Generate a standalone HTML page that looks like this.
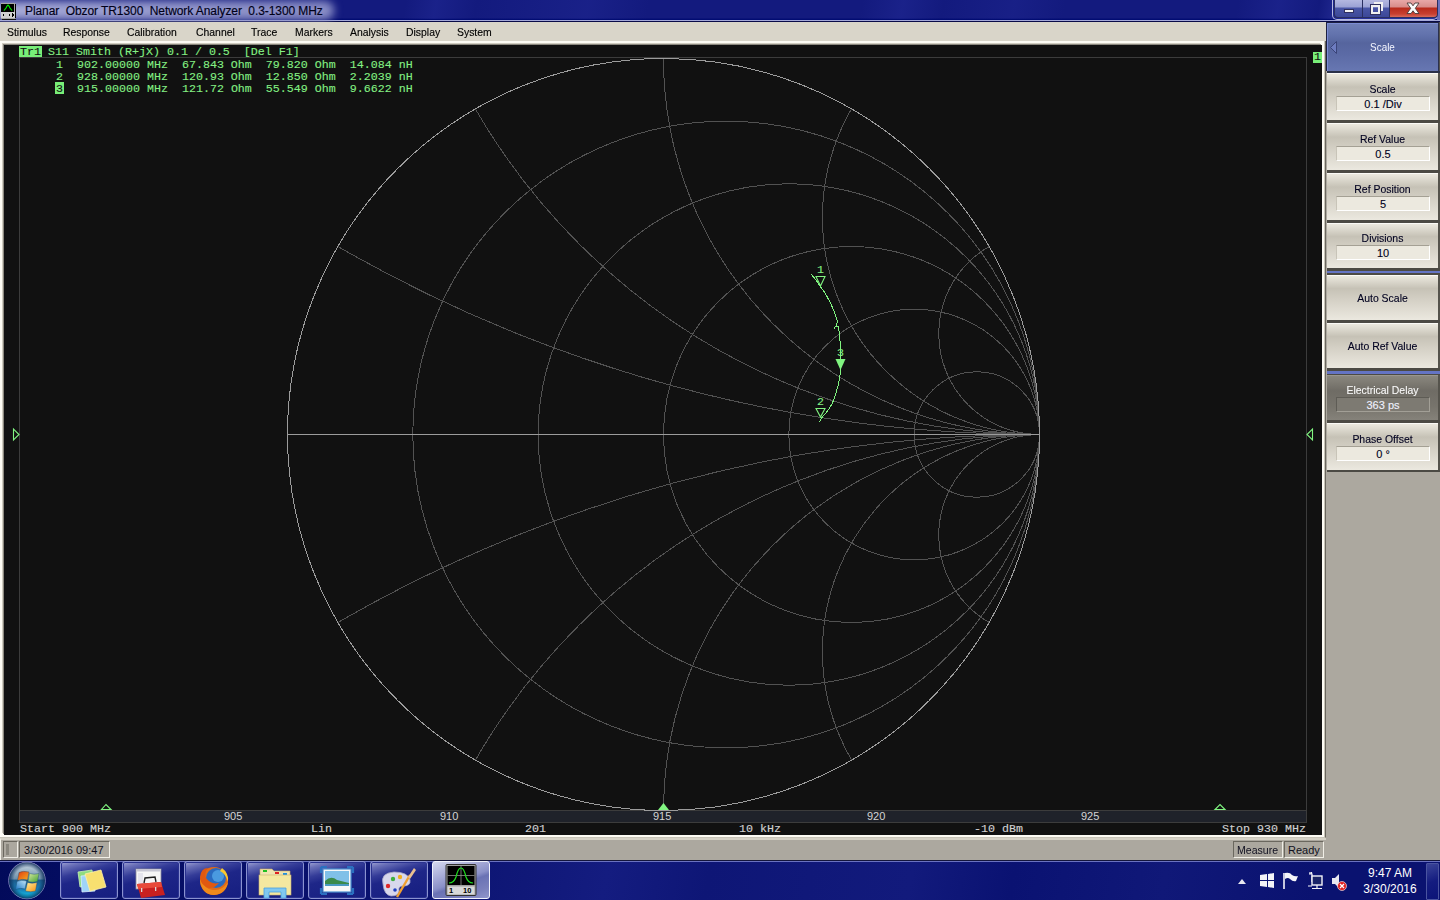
<!DOCTYPE html>
<html><head><meta charset="utf-8">
<style>
*{margin:0;padding:0;box-sizing:border-box}
html,body{width:1440px;height:900px;overflow:hidden;background:#aca89f;font-family:"Liberation Sans",sans-serif}
.a{position:absolute}
#title{left:0;top:0;width:1440px;height:22px;background:linear-gradient(180deg,#131a7e 0px,#131a7e 18px,#020c72 19px,#020c72 20px,#a4a8d8 20px,#a4a8d8 21px,#0a0c48 21px,#0a0c48 22px)}
#glow{left:-12px;top:1px;width:346px;height:19px;border-radius:9px;background:linear-gradient(90deg,#a8acd8 0,#9a9ed0 120px,#8a8ec6 300px);filter:blur(4px)}
#title .t{left:25px;top:3.5px;font-size:12px;letter-spacing:-0.08px;color:#000018;white-space:pre;-webkit-text-stroke:0.15px #000018}
.wb{position:absolute;top:0;height:18px;border:1px solid #2a2f60;border-top:none}
#menu{left:0;top:22px;width:1327px;height:19px;background:#d9d5c9}
#menu span{position:absolute;top:3.7px;font-size:11.5px;color:#000;-webkit-text-stroke:0.15px #000;transform:scaleX(0.905);transform-origin:0 0;white-space:pre}
.mono{font-family:"Liberation Mono",monospace;white-space:pre}
#chart{left:0;top:41px;width:1326px;height:797px;background:#fdfbf4;border-right:1px solid #6a675e;border-bottom:1px solid #c8c4b8}
#black{left:4px;top:45px;width:1318px;height:790px;background:#111111;box-shadow:-1px -1px 0 0 #8a877e,-2px -2px 0 0 #d0ccc0}
.g{color:#84f084;font-size:11.67px;line-height:12px;-webkit-text-stroke:0.1px currentColor}
.btn{position:absolute;left:1327px;width:112px;border-radius:2px;background:linear-gradient(180deg,#ece9df 0%,#e4e0d4 20%,#c9c5b9 45%,#d6d2c7 65%,#ece9df 100%);border-left:1px solid #fff;border-top:1px solid #f4f2ea}
.btn .l{position:absolute;left:0;width:100%;text-align:center;font-size:12px;color:#111}
.btn .v{position:absolute;left:9px;width:94px;height:15px;background:#ece9de;border-top:1px solid #b8b4a8;border-left:1px solid #b8b4a8;border-bottom:1px solid #fff;border-right:1px solid #fff;text-align:center;font-size:12px;line-height:13px;color:#111}
#status{left:0;top:838px;width:1326px;height:22px;background:#aca89f;border-top:2px solid #d6d2c6;border-left:1px solid #f4f2ea}
#taskbar{left:0;top:860px;width:1440px;height:40px;background:#0a0f6a}
.fl{top:810px;font-size:11px;color:#d4d4d4}
.bl{top:822px;font-size:11.67px;color:#d0d0d0;-webkit-text-stroke:0.15px #d0d0d0}

.rb{position:absolute;left:1327px;width:111px;background:linear-gradient(180deg,#fbfaf6 0,#fbfaf6 1px,#ebe8de 1px,#c6c2b6 30%,#d4d0c5 55%,#ebe8df 100%)}
.rl{position:absolute;left:0;width:111px;text-align:center;font-size:11px;color:#000020;-webkit-text-stroke:0.12px #000020;white-space:pre;transform:scaleX(0.95);margin-top:1px}
.rv{position:absolute;left:9px;width:94px;height:15px;background:#ece9df;border-top:1px solid #a4a094;border-left:1px solid #c8c4b8;border-bottom:1px solid #fff;border-right:1px solid #fff;text-align:center;font-size:11px;line-height:15px;color:#000020;-webkit-text-stroke:0.12px #000020;white-space:pre}
.sep{position:absolute;left:1327px;width:113px;background:#4c4a44}
.tb{position:absolute;top:1px;width:58px;height:38px;border:1px solid #8a92d0;border-radius:3px;background:linear-gradient(165deg,#a0a4d4 0,#6a70b8 12%,#343c98 30%,#1e2688 45%,#161e80 100%);box-shadow:inset 0 0 0 1px #2a3290}
</style></head><body>
<div id="title" class="a">
<div class="a" style="left:0;top:0;width:1440px;height:19px;background:linear-gradient(100deg,rgba(40,48,160,0) 0,rgba(40,48,160,0) 400px,rgba(40,48,160,0.35) 430px,rgba(40,48,160,0) 470px,rgba(40,48,160,0.3) 580px,rgba(40,48,160,0) 640px,rgba(40,48,160,0) 850px,rgba(40,48,160,0.35) 890px,rgba(40,48,160,0) 930px,rgba(40,48,160,0.25) 1000px,rgba(40,48,160,0) 1050px,rgba(40,48,160,0) 1220px,rgba(40,48,160,0.35) 1260px,rgba(40,48,160,0) 1300px,rgba(60,70,180,0.6) 1333px)"></div>
<div id="glow" class="a"></div>
<svg class="a" style="left:0;top:0" width="20" height="22" viewBox="0 0 20 22" shape-rendering="crispEdges">
<rect x="1" y="3" width="14" height="16" fill="#a8a8a8"/>
<rect x="15" y="4" width="1" height="14" fill="#000"/>
<rect x="2" y="19" width="14" height="1" fill="#111"/>
<rect x="1" y="4" width="13" height="8" fill="#000"/>
<rect x="1" y="12" width="14" height="6" fill="#d0d0d0"/>
<polyline points="4,10.5 6,8 7,6 8,5 9,6 10,8 12,10.5" fill="none" stroke="#00ee00" stroke-width="1.2" shape-rendering="auto"/>
<polygon points="2,15 4,13 4,17" fill="#000"/><polygon points="8,15 10,13 10,17" fill="#000"/><polygon points="14,15 12,13 12,17" fill="#000"/>
</svg>
<div class="t a">Planar  Obzor TR1300  Network Analyzer  0.3-1300 MHz</div>
<div class="a" style="left:1332px;top:0;width:106px;height:20px;border:1px solid #b8bce0;border-top:none;border-radius:0 0 5px 5px"></div><div class="a" style="left:1437px;top:0;width:3px;height:20px;background:#6a72bc"></div>
<div class="wb" style="left:1334px;width:29px;border-radius:0 0 0 4px;background:linear-gradient(180deg,#b4b8e0 0,#9ca2d4 7px,#4a56a6 8px,#3c4898 17px)"><div class="a" style="left:9px;top:9px;width:10px;height:4px;background:#f4f4f4;border:1px solid #303060"></div></div>
<div class="wb" style="left:1363px;width:27px;border-left:none;background:linear-gradient(180deg,#b4b8e0 0,#9ca2d4 7px,#4a56a6 8px,#3c4898 17px)"><div class="a" style="left:8px;top:5px;width:9px;height:9px;border:2px solid #f0f0f0;outline:1px solid #303060"></div><div class="a" style="left:11px;top:2px;width:9px;height:9px;border-top:2px solid #f0f0f0;border-right:2px solid #f0f0f0"></div></div>
<div class="wb" style="left:1390px;width:48px;border-left:none;border-radius:0 0 4px 0;background:linear-gradient(180deg,#e8a8a8 0,#d88c8a 7px,#b82a1c 8px,#c84030 14px,#d86a5c 17px)"><svg class="a" style="left:13px;top:1px" width="20" height="15" viewBox="0 0 20 15"><path d="M4,2 L8,2 L10,4.8 L12,2 L16,2 L12.3,7.3 L16,12.5 L12,12.5 L10,9.8 L8,12.5 L4,12.5 L7.7,7.3 Z" fill="#fafafa" stroke="#4a3a3a" stroke-width="0.9" stroke-linejoin="round"/></svg></div>
</div>
<div id="menu" class="a">
<span style="left:7px">Stimulus</span><span style="left:63px">Response</span><span style="left:127px">Calibration</span><span style="left:196px">Channel</span><span style="left:251px">Trace</span><span style="left:295px">Markers</span><span style="left:350px">Analysis</span><span style="left:406px">Display</span><span style="left:457px">System</span>
</div>
<div id="chart" class="a"></div><div class="a" style="left:1324px;top:41px;width:1px;height:797px;background:#c8c4b8"></div>
<div id="black" class="a"></div>
<svg class="a" style="left:0;top:0" width="1440" height="900" viewBox="0 0 1440 900">
<defs><clipPath id="disc"><circle cx="663.5" cy="434.5" r="376"/></clipPath></defs>
<rect x="19.5" y="57.5" width="1287" height="765" fill="none" stroke="#3c3c3c"/>
<rect x="20" y="811" width="1286" height="11" fill="#1f222a"/>
<line x1="19.5" y1="810.5" x2="1306.5" y2="810.5" stroke="#3c3c3c"/>
<g fill="none" stroke="#525252" stroke-width="1" clip-path="url(#disc)" shape-rendering="crispEdges">
<circle cx="726.17" cy="434.5" r="313.33"/>
<circle cx="788.83" cy="434.5" r="250.67"/>
<circle cx="851.50" cy="434.5" r="188.00"/>
<circle cx="914.17" cy="434.5" r="125.33"/>
<circle cx="976.83" cy="434.5" r="62.67"/>
<circle cx="1039.50" cy="333.75" r="100.75"/>
<circle cx="1039.50" cy="535.25" r="100.75"/>
<circle cx="1039.50" cy="217.42" r="217.08"/>
<circle cx="1039.50" cy="651.58" r="217.08"/>
<circle cx="1039.50" cy="58.50" r="376.00"/>
<circle cx="1039.50" cy="810.50" r="376.00"/>
<circle cx="1039.50" cy="-216.75" r="651.25"/>
<circle cx="1039.50" cy="1085.75" r="651.25"/>
<circle cx="1039.50" cy="-968.75" r="1403.25"/>
<circle cx="1039.50" cy="1837.75" r="1403.25"/>
</g>
<g fill="none" stroke="#9c9c9c" shape-rendering="crispEdges">
<circle cx="663.5" cy="434.5" r="376"/>
<line x1="287.5" y1="434.5" x2="1039.5" y2="434.5"/>
</g>
<g fill="none" stroke="#80f480" stroke-width="1" shape-rendering="crispEdges">
<polyline points="811,274 816,280 820,286 825,293 830,302 834,311 837,320 837,323 836,326 834,328.5 836,326 838,326 839,331 840,341 841,350 840.5,369 840,375 839,381 838,386 836.5,391 834.5,398 832,404 829,409 825,414 821.5,418 819.5,422"/>
</g>
<g fill="#80f480">
<polygon points="835.5,359 845.5,359 840.5,370"/>
<polygon points="658,810 669,810 663.5,803"/>
</g>
<g fill="none" stroke="#80f480" stroke-width="1.1">
<polygon points="816,276.5 825,276.5 820.5,286"/>
<polygon points="816,408.5 825,408.5 820.5,417"/>
<polygon points="101.5,809.5 111,809.5 106,804.5"/>
<polygon points="1215,809.5 1225,809.5 1220,804.5"/>
<polygon points="13.5,429 13.5,440 19,434.5"/>
<polygon points="1312.5,429 1312.5,440 1307,434.5"/>
</g>
</svg>

<div class="a" style="left:19px;top:46px;width:23px;height:11px;background:#78ee78"></div>
<div class="a mono g" style="left:20px;top:46px;color:#101010">Tr1</div>
<div class="a mono g" style="left:48px;top:46px">S11 Smith (R+jX) 0.1 / 0.5  [Del F1]</div>
<div class="a mono g" style="left:56px;top:59px">1  902.00000 MHz  67.843 Ohm  79.820 Ohm  14.084 nH</div>
<div class="a mono g" style="left:56px;top:71px">2  928.00000 MHz  120.93 Ohm  12.850 Ohm  2.2039 nH</div>
<div class="a" style="left:55px;top:82px;width:9px;height:12px;background:#78ee78"></div>
<div class="a mono g" style="left:56px;top:83px"><span style="color:#101010">3</span>  915.00000 MHz  121.72 Ohm  55.549 Ohm  9.6622 nH</div>
<div class="a" style="left:1313px;top:52px;width:9px;height:11px;background:#78ee78"></div>
<div class="a mono g" style="left:1314px;top:51px;color:#101010">1</div>
<div class="a mono g" style="left:817px;top:264px">1</div>
<div class="a mono g" style="left:817px;top:396px">2</div>
<div class="a mono g" style="left:837px;top:347px">3</div>
<div class="a fl" style="left:224px">905</div><div class="a fl" style="left:440px">910</div><div class="a fl" style="left:653px">915</div><div class="a fl" style="left:867px">920</div><div class="a fl" style="left:1081px">925</div>
<div class="a mono bl" style="left:20px">Start 900 MHz</div>
<div class="a mono bl" style="left:311px">Lin</div>
<div class="a mono bl" style="left:525px">201</div>
<div class="a mono bl" style="left:739px">10 kHz</div>
<div class="a mono bl" style="left:974px">-10 dBm</div>
<div class="a mono bl" style="left:1222px">Stop 930 MHz</div>


<div class="a" style="left:1326px;top:22px;width:114px;height:838px;background:#aca89f"></div>
<div class="a" style="left:1438px;top:22px;width:2px;height:450px;background:#55534c"></div>
<div class="a" style="left:1326px;top:22px;width:113px;height:49px;background:linear-gradient(180deg,#7080b8 0,#6272ac 12px,#56659e 20px,#5c6ba6 32px,#6777b2 48px);border-top:1px solid #1c2040;border-left:1px solid #1c2040;border-right:1px solid #2a3050;box-shadow:inset 1px 1px 0 #7c8cd4"></div>
<div class="a" style="left:1327px;top:71px;width:113px;height:2px;background:#2a3048"></div>
<svg class="a" style="left:1329px;top:40px" width="10" height="16"><polygon points="7.5,1.5 7.5,13.5 1.5,7.5" fill="#6d7cc0" stroke="#3a4478" stroke-width="1"/></svg>
<div class="a" style="left:1327px;top:41px;width:111px;text-align:center;font-size:11px;color:#f4f6ff;transform:scaleX(0.9)">Scale</div>
<div class="rb" style="top:73px;height:47px"><div class="rl" style="top:9px">Scale</div><div class="rv" style="top:23px">0.1 /Div</div></div>
<div class="sep" style="top:120px;height:3px"></div>
<div class="rb" style="top:123px;height:47px"><div class="rl" style="top:9px">Ref Value</div><div class="rv" style="top:23px">0.5</div></div>
<div class="sep" style="top:170px;height:3px"></div>
<div class="rb" style="top:173px;height:47px"><div class="rl" style="top:9px">Ref Position</div><div class="rv" style="top:23px">5</div></div>
<div class="sep" style="top:220px;height:3px"></div>
<div class="rb" style="top:223px;height:45px"><div class="rl" style="top:8px">Divisions</div><div class="rv" style="top:22px">10</div></div>
<div class="sep" style="top:268px;height:7px"></div>
<div class="a" style="left:1327px;top:270.5px;width:113px;height:2.5px;background:#6474c4"></div>
<div class="rb" style="top:275px;height:45px"><div class="rl" style="top:16px">Auto Scale</div></div>
<div class="sep" style="top:320px;height:3px"></div>
<div class="rb" style="top:323px;height:45px"><div class="rl" style="top:16px">Auto Ref Value</div></div>
<div class="sep" style="top:368px;height:7px"></div>
<div class="a" style="left:1327px;top:370.5px;width:113px;height:3px;background:#6474c4"></div>
<div class="a" style="left:1327px;top:375px;width:111px;height:45px;background:linear-gradient(180deg,#9a978e 0,#9a978e 1px,#8a877e 1px,#6f6c65 35%,#77746c 70%,#85827a 100%)"><div class="rl" style="top:8px;color:#f8f8f8;-webkit-text-stroke:0.1px #f8f8f8">Electrical Delay</div><div class="rv" style="top:22px;background:#7d7a72;border-top-color:#5e5c55;border-left-color:#5e5c55;border-bottom-color:#a29f96;border-right-color:#a29f96;color:#f0f2ff;-webkit-text-stroke:0.1px #f0f2ff">363 ps</div></div>
<div class="sep" style="top:420px;height:3px"></div>
<div class="rb" style="top:423px;height:47px"><div class="rl" style="top:9px">Phase Offset</div><div class="rv" style="top:23px">0 °</div></div>
<div class="sep" style="top:470px;height:2px"></div>
<div id="status" class="a">
<div class="a" style="left:2px;top:1px;width:15px;height:17px;border:1px solid;border-color:#6a675e #f0eee6 #f0eee6 #6a675e"><div class="a" style="left:2px;top:2px;width:3px;height:11px;background:#8a877e"></div></div>
<div class="a" style="left:18px;top:1px;width:91px;height:17px;border:1px solid;border-color:#6a675e #f0eee6 #f0eee6 #6a675e;font-size:11px;line-height:16px;padding-left:4px;color:#101020">3/30/2016 09:47</div>
<div class="a" style="left:1232px;top:1px;width:50px;height:17px;border:1px solid;border-color:#6a675e #f0eee6 #f0eee6 #6a675e;font-size:11px;line-height:16px;padding-left:3px;color:#101020;white-space:pre"><span style="display:inline-block;transform:scaleX(0.96);transform-origin:0 0">Measure</span></div>
<div class="a" style="left:1283px;top:1px;width:40px;height:17px;border:1px solid;border-color:#6a675e #f0eee6 #f0eee6 #6a675e;font-size:11px;line-height:16px;padding-left:3px;color:#101020">Ready</div>
</div>
<div id="taskbar" class="a">
<div class="a" style="left:0;top:0;width:1440px;height:1px;background:#14163c"></div><div class="a" style="left:0;top:1px;width:1440px;height:1px;background:#6a72c0"></div>
<div class="a" style="left:0;top:2px;width:1440px;height:38px;background:linear-gradient(100deg,#020a5a 0,#040c60 60px,#0a1270 400px,#101878 520px,#141c80 600px,#0e1676 700px,#121a7c 900px,#0a1272 1000px,#101878 1150px,#0a1270 1300px,#0a1270 1440px)"></div>
<svg class="a" style="left:6px;top:0" width="44" height="40" viewBox="0 0 44 40">
<defs>
<linearGradient id="orbg" x1="0" y1="0" x2="0" y2="1"><stop offset="0" stop-color="#d0dce6"/><stop offset="0.45" stop-color="#6f92ac"/><stop offset="0.5" stop-color="#1c5c8c"/><stop offset="0.75" stop-color="#1a80b8"/><stop offset="1" stop-color="#10d8f8"/></linearGradient>
<linearGradient id="fr" x1="0" y1="0" x2="1" y2="1"><stop offset="0" stop-color="#e03a10"/><stop offset="1" stop-color="#f8b020"/></linearGradient>
<linearGradient id="fg" x1="0" y1="0" x2="1" y2="1"><stop offset="0" stop-color="#d8eaa0"/><stop offset="1" stop-color="#40a030"/></linearGradient>
<linearGradient id="fb" x1="1" y1="0" x2="0" y2="1"><stop offset="0" stop-color="#c8e8f8"/><stop offset="1" stop-color="#1a78c8"/></linearGradient>
<linearGradient id="fy" x1="0" y1="0" x2="1" y2="1"><stop offset="0" stop-color="#fff0a0"/><stop offset="1" stop-color="#f89010"/></linearGradient>
</defs>
<radialGradient id="rim" cx="50%" cy="50%" r="50%"><stop offset="0.72" stop-color="#0a2a58" stop-opacity="0"/><stop offset="1" stop-color="#0a2a58" stop-opacity="0.85"/></radialGradient>
<circle cx="21" cy="20.5" r="18.3" fill="url(#orbg)" stroke="#8a88c0" stroke-width="0.9"/><circle cx="21" cy="20.5" r="18" fill="url(#rim)"/>
<path d="M13,12.5 Q17,10.5 23,12 L21.5,20 Q17,18.5 11.5,20.5 Z" fill="url(#fr)" stroke="#1a4a70" stroke-width="0.4"/>
<path d="M23.5,13.5 Q28,15 33,13.5 L31.5,21.5 Q27,23 22,21.5 Z" fill="url(#fg)" stroke="#1a4a70" stroke-width="0.4"/>
<path d="M11,21.5 Q15,19.5 20.5,21 L19,29 Q14.5,27.5 9.5,29.5 Z" fill="url(#fb)" stroke="#1a4a70" stroke-width="0.4"/>
<path d="M21.5,22.5 Q26,24 31,22.5 L29.5,31 Q25,32.5 19.5,31 Z" fill="url(#fy)" stroke="#1a4a70" stroke-width="0.4"/>
</svg>
<div class="tb" style="left:60px"></div>
<div class="tb" style="left:122px"></div>
<div class="tb" style="left:184px"></div>
<div class="tb" style="left:246px"></div>
<div class="tb" style="left:308px"></div>
<div class="tb" style="left:370px"></div>
<div class="tb" style="left:432px;border-color:#f0f2fc;box-shadow:none;background:linear-gradient(160deg,#d4d8ee 0,#a8acd8 30%,#8a90c8 50%,#6a72b4 58%,#7a80bc 80%,#9096cc 100%)"></div>
<!-- icons -->
<svg class="a" style="left:0;top:0" width="500" height="40" viewBox="0 0 500 40">
<!-- notes center 89 -->
<polygon points="78,12 92,10 94,25 80,27" fill="#90dc80" stroke="#c8f0b8" stroke-width="0.8"/>
<polygon points="81,16 94,15 95,31 82,32" fill="#a0d4f8" stroke="#d8f0ff" stroke-width="0.8"/>
<polygon points="85,14 101,10 106,27 90,31" fill="#f8e070" stroke="#fff0a8" stroke-width="0.8"/>
<!-- toolbox center 151 -->
<rect x="136" y="9" width="25" height="20" fill="#f6f6f6" stroke="#8a8a98" stroke-width="0.8"/>
<rect x="136" y="9" width="25" height="2.5" fill="#c8c8d4"/>
<rect x="138" y="13" width="5" height="14" fill="#e4e4ec"/>
<path d="M137,24 L161,22 L165,35 L141,38 Z" fill="#c82020"/>
<path d="M137,24 L161,22 L162,27 L138,29 Z" fill="#e84a3a"/>
<path d="M144,23 L145,18 L155,17 L156,22" fill="none" stroke="#202020" stroke-width="1.4"/>
<rect x="141" y="28" width="1.3" height="4" fill="#d8d8d8"/><rect x="155" y="27" width="1.3" height="4" fill="#d8d8d8"/>
<!-- firefox center 213 -->
<circle cx="214" cy="21" r="14" fill="#e06a18"/>
<circle cx="216" cy="18" r="10" fill="#2a6ac0"/>
<circle cx="218" cy="16" r="6" fill="#4a9ae0"/>
<path d="M200,20 Q202,35 214,35 Q226,34 228,22 Q222,31 213,30 Q203,29 203,18 Z" fill="#f08a1a"/>
<path d="M200,17 Q201,8 208,8 Q204,13 206,18 Q211,25 219,23 Q213,30 206,27 Q200,23 200,17Z" fill="#e05810"/>
<path d="M222,8 Q229,13 228,22 Q226,14 220,11 Z" fill="#f8c830"/>
<!-- explorer folder center 275 -->
<path d="M260,9 L272,9 L274,11 L290,11 L290,16 L260,16Z" fill="#f0e4b0" stroke="#c8a860" stroke-width="0.6"/>
<rect x="263" y="10" width="4" height="2" fill="#20c020"/><rect x="275" y="12" width="4" height="2" fill="#e02020"/><rect x="283" y="13" width="4" height="2" fill="#2090e0"/>
<rect x="259" y="15" width="32" height="20" fill="#f4e8a0" stroke="#c8b070" stroke-width="0.6"/>
<path d="M264,28 L286,28 L286,38 L281,38 L281,32 L269,32 L269,38 L264,38Z" fill="#80c8f0" stroke="#4aa0e0" stroke-width="0.8"/>
<!-- photo viewer center 337 -->
<rect x="323" y="9" width="28" height="23" fill="#f8f8f8" stroke="#4a90d0" stroke-width="1.2"/>
<rect x="325" y="11" width="24" height="15" fill="#80c0e8"/>
<path d="M325,21 Q331,15 337,20 L349,23 L349,26 L325,26Z" fill="#3a8a4a"/>
<rect x="325" y="24" width="24" height="2" fill="#4a9ac0"/>
<path d="M321,7 L327,7 M321,7 L321,13 M353,7 L347,7 M353,7 L353,13 M321,34 L327,34 M321,34 L321,28 M353,34 L347,34 M353,34 L353,28" stroke="#2a70c0" stroke-width="2.2"/>
<!-- paint center 399 -->
<path d="M383,24 Q380,13 394,12 Q408,12 410,20 Q411,26 403,26 Q398,26 399,31 Q399,36 391,36 Q384,35 383,24Z" fill="#d8d8ec" stroke="#a8a8c8" stroke-width="0.8"/>
<circle cx="388" cy="26" r="2.2" fill="#e02828"/><circle cx="393" cy="19" r="2.2" fill="#40b040"/><circle cx="400" cy="17" r="2.2" fill="#f0b020"/><circle cx="395" cy="30" r="1.8" fill="#2040c0"/>
<path d="M397,37 L410,15" stroke="#f0a030" stroke-width="2.4"/>
<path d="M408,17 L414,8 L416,10 L410,19Z" fill="#e8c090"/>
</svg>
<svg class="a" style="left:440px;top:3px" width="44" height="36" viewBox="0 0 44 36">
<rect x="6" y="1.5" width="30" height="31" rx="1" fill="#a0a0a0" stroke="#303030" stroke-width="1"/>
<rect x="7.5" y="3" width="27" height="19" fill="#000"/>
<path d="M21,3 L21,22 M7.5,12.5 L34.5,12.5" stroke="#909090" stroke-width="0.8"/>
<path d="M9,20 Q14,20 16,14 Q18,5 21,5 Q24,5 26,14 Q28,20 33,20" fill="none" stroke="#20e020" stroke-width="1.2"/>
<rect x="7.5" y="23.5" width="27" height="8" fill="#d8d8d8"/>
<text x="9" y="30" font-family="Liberation Sans" font-size="7.5" font-weight="bold" fill="#000">1</text><text x="23" y="30" font-family="Liberation Sans" font-size="7.5" font-weight="bold" fill="#000">10</text>
</svg>
<!-- tray -->
<svg class="a" style="left:1236px;top:0" width="120" height="40" viewBox="0 0 120 40">
<polygon points="2,24 10,24 6,19" fill="#e8e8f0"/>
<path d="M24,15 L31,14 L31,20 L24,20Z M32,14 L38,13 L38,20 L32,20Z M24,21 L31,21 L31,27 L24,26Z M32,21 L38,21 L38,28 L32,27Z" fill="#f4f4f8"/>
<path d="M48,13 L48,29" stroke="#f4f4f8" stroke-width="1.6"/>
<path d="M49,13 Q54,12 56,15 Q59,17 62,16 L60,21 Q57,22 54,19 Q52,17 49,19Z" fill="#f4f4f8"/>
<path d="M73,14 L76,14 L76,22 M74,14 L74,12 M75.5,14 L75.5,12" stroke="#f4f4f8" stroke-width="1.2" fill="none"/>
<rect x="76" y="16" width="10" height="9" fill="#1a2468" stroke="#f4f4f8" stroke-width="1.4"/>
<path d="M81,25 L81,28 M76,28.5 L86,28.5 M72,26 L76,26" stroke="#f4f4f8" stroke-width="1.2"/>
<path d="M96,18 L99,18 L103,14 L103,28 L99,24 L96,24Z" fill="#e8e8f0"/>
<circle cx="106" cy="26" r="4.5" fill="#e02020" stroke="#fff" stroke-width="0.6"/>
<path d="M104,24 L108,28 M108,24 L104,28" stroke="#fff" stroke-width="1.3"/>
</svg>
<div class="a" style="left:1353px;top:6px;width:74px;text-align:center;font-size:12px;color:#fff;line-height:14px">9:47 AM</div>
<div class="a" style="left:1353px;top:22px;width:74px;text-align:center;font-size:12px;color:#fff;line-height:14px">3/30/2016</div>
<div class="a" style="left:1426px;top:3px;width:13px;height:37px;border:1px solid #4a54a0;border-radius:1px;background:linear-gradient(160deg,#3a4498 0,#141c80 50%,#0c1478 100%)"></div>
</div>
</body></html>
